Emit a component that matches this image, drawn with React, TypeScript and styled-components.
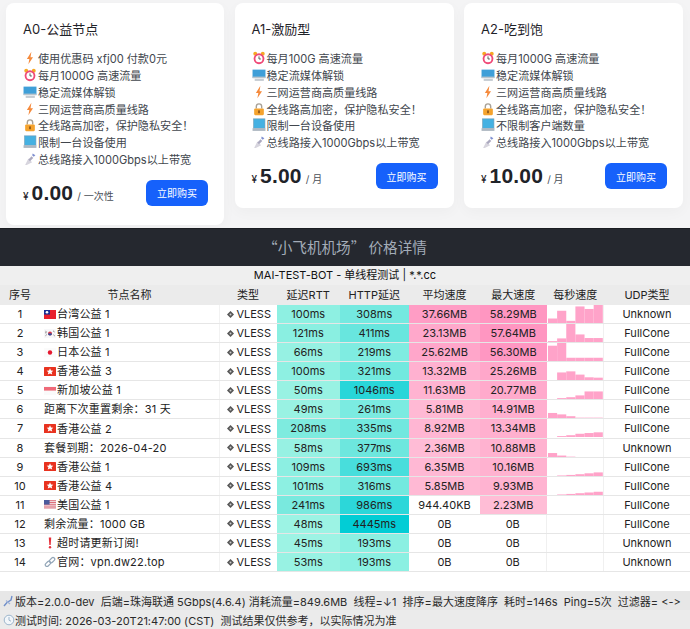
import React from "react";
import styled, { createGlobalStyle } from "styled-components";

const Global = createGlobalStyle`
  html, body { margin: 0; padding: 0; background: #fff; }
  body {
    font-family: Inter, "Noto Sans CJK SC", "Noto Sans", sans-serif;
    font-variant-ligatures: none;
    font-feature-settings: "calt" 0, "liga" 0;
    width: 690px;
    height: 629px;
    overflow: hidden;
  }
  * { box-sizing: border-box; }
`;

const Page = styled.div`
  width: 690px;
  height: 629px;
  display: flex;
  flex-direction: column;
  overflow: hidden;
`;

const Plans = styled.section`
  height: 228px;
  background: #f4f4f5;
  display: grid;
  grid-template-columns: 218px 219px 219px;
  column-gap: 10.5px;
  align-items: start;
  padding: 3px 0 0 6px;
`;

const Card = styled.article<{ $tall?: boolean }>`
  background: #fff;
  border-radius: 8px;
  height: ${(p) => (p.$tall ? 222 : 205)}px;
  padding: 17px 16px 0 17px;
  box-shadow: 0 4px 14px rgba(0, 0, 0, 0.03);
  display: flex;
  flex-direction: column;
`;

const CardTitle = styled.h3`
  margin: 0;
  font-size: 13px;
  line-height: 18px;
  font-weight: 400;
  color: #1f2329;
`;

const Features = styled.ul`
  list-style: none;
  margin: 12px 0 0;
  padding: 0;
`;

const Feature = styled.li`
  display: flex;
  align-items: center;
  height: 16.75px;
  font-size: 11.1px;
  color: #41464d;
  white-space: nowrap;
`;

const EmojiSlot = styled.svg`
  width: 14px;
  height: 14px;
  margin-right: 1px;
  flex: none;
`;

const Buy = styled.div`
  display: flex;
  align-items: center;
  justify-content: space-between;
  margin-top: 12.6px;
  height: 26px;
`;

const Price = styled.div`
  display: flex;
  align-items: baseline;
  color: #1f2329;
`;

const Currency = styled.span`
  font-size: 10px;
  margin-right: 3px;
  font-weight: 500;
`;

const Amount = styled.span`
  font-family: "Liberation Sans", Arial, sans-serif;
  font-size: 21px;
  font-weight: 700;
  letter-spacing: 0.2px;
`;

const Period = styled.span`
  font-size: 10px;
  margin-left: 4px;
  color: #4a4f57;
`;

const BuyButton = styled.button`
  width: 62px;
  height: 26px;
  border: 0;
  border-radius: 6px;
  background: #1661fb;
  color: #fff;
  font: 400 10px "Noto Sans CJK SC", sans-serif;
  padding: 0;
`;

const Banner = styled.h2`
  margin: 0;
  height: 38px;
  background: #25282f;
  border-top: 1px solid #1b1d22;
  color: #a3acb8;
  font-family: "Noto Sans CJK SC", sans-serif;
  font-size: 14.6px;
  font-weight: 400;
  line-height: 36px;
  text-align: center;
`;

const ReportTitle = styled.div`
  height: 19px;
  background: #efefef;
  color: #111;
  font-size: 11px;
  line-height: 19px;
  text-align: center;
`;

const COLS = "40px 179px 58px 62.5px 69.5px 71px 66.5px 57.5px 86px";

const HeadRow = styled.div`
  display: grid;
  grid-template-columns: ${COLS};
  height: 20.3px;
  background: #ebebeb;
`;

const HeadCell = styled.div`
  font-size: 11px;
  line-height: 20px;
  text-align: center;
  color: #222;
  white-space: nowrap;
`;

const Row = styled.div`
  display: grid;
  grid-template-columns: ${COLS};
  height: 19.1px;
  background: #fff;
  border-bottom: 1px solid #e6e6e6;
`;

const Cell = styled.div<{ $bg?: string; $left?: boolean; $line?: boolean }>`
  font-size: 11px;
  line-height: 18px;
  color: #222;
  white-space: nowrap;
  overflow: hidden;
  text-align: ${(p) => (p.$left ? "left" : "center")};
  background: ${(p) => p.$bg ?? "transparent"};
  border-right: ${(p) => (p.$line ? "1px solid #f0f0f0" : "0")};
`;

const NameCell = styled(Cell)`
  display: flex;
  align-items: center;
  padding-left: 4px;
  letter-spacing: 0.2px;
`;

const TypeCell = styled(Cell)`
  display: flex;
  align-items: center;
  justify-content: flex-end;
  padding-right: 6px;
  border-left: 1px solid #f2f2f2;
`;

const Flag = styled.svg`
  width: 12px;
  height: 9px;
  margin-right: 1px;
  flex: none;
`;

const Glyph = styled.svg`
  width: 12px;
  height: 12px;
  margin-right: 1px;
  flex: none;
`;

const Diamond = styled.svg`
  width: 7px;
  height: 7px;
  margin-right: 2px;
  flex: none;
`;

const Spark = styled.svg`
  display: block;
  width: 100%;
  height: 18px;
`;

const Gap = styled.div`
  height: 19px;
  background: #fff;
`;

const Status = styled.div<{ $alt?: boolean }>`
  height: 19px;
  background: ${(p) => (p.$alt ? "#ebebeb" : "#e7e7e7")};
  display: flex;
  align-items: center;
  padding-left: 3px;
  font-size: 11px;
  color: #2a2a2a;
  white-space: pre;
`;

const StatusIcon = styled.svg`
  width: 12px;
  height: 12px;
  flex: none;
`;

type Em = "bolt" | "clock" | "screen" | "lock" | "laptop" | "sat";

function Emoji({ k }: { k: Em }) {
  return (
    <EmojiSlot viewBox="0 0 13 13">
      {k === "bolt" && <path d="M7.8 .8 3.6 7.4h2.3L5 12.4l4.3-6.6H7Z" fill="#f58a3c" />}
      {k === "clock" && (
        <>
          <circle cx="3" cy="2.6" r="1.8" fill="#f6a723" />
          <circle cx="10" cy="2.6" r="1.8" fill="#f6a723" />
          <circle cx="6.5" cy="7.2" r="5" fill="#ef4a78" />
          <circle cx="6.5" cy="7.2" r="3.3" fill="#fff" />
          <path d="M6.5 5v2.4h1.7" stroke="#555" strokeWidth=".9" fill="none" />
        </>
      )}
      {k === "screen" && (
        <>
          <rect x="0.5" y="1.5" width="12" height="7.5" fill="#3f9fd8" />
          <rect x="0.5" y="8" width="12" height="1.5" fill="#b9c4cc" />
          <rect x="2.5" y="10" width="8.5" height="2" fill="#c5ccd2" />
        </>
      )}
      {k === "lock" && (
        <>
          <path d="M4 6V4.2a2.5 2.5 0 0 1 5 0V6" stroke="#a8a196" strokeWidth="1.3" fill="none" />
          <rect x="2" y="6" width="9" height="6.2" rx="1" fill="#f5a32e" />
          <rect x="5.8" y="7.8" width="1.4" height="2.6" fill="#7d4a16" />
        </>
      )}
      {k === "laptop" && (
        <>
          <rect x="1.5" y="0.8" width="10.5" height="8.7" fill="#45b1e2" />
          <rect x="1.5" y="0.8" width="10.5" height="8.7" fill="none" stroke="#6d9db8" strokeWidth=".6" />
          <rect x="0.5" y="9.5" width="12" height="2.5" fill="#aeb8c2" />
        </>
      )}
      {k === "sat" && (
        <>
          <path d="M2 12 5 6l3.5 3.5L3.5 12Z" fill="#d7d5de" />
          <path d="M5 7l3-3 1.5 1.5-3 3Z" fill="#aba9bf" />
          <path d="M9 1.5 11.5 3 10 4.5 8.5 3Z" fill="#7f8fd0" />
        </>
      )}
    </EmojiSlot>
  );
}

type FlagK = "tw" | "kr" | "jp" | "hk" | "sg" | "us";

function FlagIcon({ k }: { k: FlagK }) {
  return (
    <Flag viewBox="0 0 12 9">
      {k === "tw" && (
        <>
          <rect width="12" height="9" fill="#e8202c" />
          <rect width="6" height="4.6" fill="#1a2f95" />
          <circle cx="3" cy="2.3" r="1.3" fill="#fff" />
        </>
      )}
      {k === "kr" && (
        <>
          <rect width="12" height="9" fill="#f7f7f9" />
          <circle cx="6" cy="4.5" r="2" fill="#d9364a" />
          <path d="M4 4.5a2 2 0 0 0 4 0Z" fill="#27509e" />
          <path d="M1.4 2.2 3 3.4M1 3.4 2.2 4.4M9 1.8l1.6 1.2M9.4 5.8l1.4 1.2M1.4 6.8l1.4-1.2" stroke="#666" strokeWidth=".7" />
        </>
      )}
      {k === "jp" && (
        <>
          <rect width="12" height="9" fill="#fbfbfb" />
          <circle cx="6" cy="4.5" r="2.2" fill="#e5182f" />
        </>
      )}
      {k === "hk" && (
        <>
          <rect width="12" height="9" rx="0.5" fill="#e8321f" />
          <path d="M6 1.3 7 3.5l2.3.2L7.6 5.3l.6 2.3L6 6.4 3.8 7.6l.6-2.3L2.7 3.7 5 3.5Z" fill="#fff" />
        </>
      )}
      {k === "sg" && (
        <>
          <rect width="12" height="9" fill="#fafafa" />
          <rect width="12" height="3.6" y="1" fill="#ef6a78" />
        </>
      )}
      {k === "us" && (
        <>
          <rect width="12" height="9" fill="#f4f0f2" />
          <path d="M0 .7h12M0 2.5h12M0 4.3h12M0 6.1h12M0 7.9h12" stroke="#d9606c" strokeWidth=".9" />
          <rect width="5.6" height="4.6" fill="#4b5a9c" />
        </>
      )}
    </Flag>
  );
}

const plans: { title: string; tall?: boolean; feats: [Em, string][]; price: string; period: string }[] = [
  {
    title: "A0-公益节点",
    tall: true,
    feats: [
      ["bolt", "使用优惠码 xfj00 付款0元"],
      ["clock", "每月1000G 高速流量"],
      ["screen", "稳定流媒体解锁"],
      ["bolt", "三网运营商高质量线路"],
      ["lock", "全线路高加密，保护隐私安全！"],
      ["laptop", "限制一台设备使用"],
      ["sat", "总线路接入1000Gbps以上带宽"],
    ],
    price: "0.00",
    period: "/ 一次性",
  },
  {
    title: "A1-激励型",
    feats: [
      ["clock", "每月100G 高速流量"],
      ["screen", "稳定流媒体解锁"],
      ["bolt", "三网运营商高质量线路"],
      ["lock", "全线路高加密，保护隐私安全！"],
      ["laptop", "限制一台设备使用"],
      ["sat", "总线路接入1000Gbps以上带宽"],
    ],
    price: "5.00",
    period: "/ 月",
  },
  {
    title: "A2-吃到饱",
    feats: [
      ["clock", "每月1000G 高速流量"],
      ["screen", "稳定流媒体解锁"],
      ["bolt", "三网运营商高质量线路"],
      ["lock", "全线路高加密，保护隐私安全！"],
      ["laptop", "不限制客户端数量"],
      ["sat", "总线路接入1000Gbps以上带宽"],
    ],
    price: "10.00",
    period: "/ 月",
  },
];

type Prefix = FlagK | "warn" | "link" | null;

const rows: {
  name: string;
  pre: Prefix;
  rtt: [string, string];
  http: [string, string];
  avg: [string, string];
  max: [string, string];
  bars: number[];
  udp: string;
}[] = [
  { name: "台湾公益 1", pre: "tw", rtt: ["100ms", "#8ef0e2"], http: ["308ms", "#74e9e0"], avg: ["37.66MB", "#ff9dc5"], max: ["58.29MB", "#ff96c1"], bars: [0.25, 0.68, 0.12, 0.92, 0.78, 1], udp: "Unknown" },
  { name: "韩国公益 1", pre: "kr", rtt: ["121ms", "#8aefe1"], http: ["411ms", "#68e6de"], avg: ["23.13MB", "#ffa8cb"], max: ["57.64MB", "#ff96c1"], bars: [0.05, 0.2, 1, 0.42, 0.22, 0.22], udp: "FullCone" },
  { name: "日本公益 1", pre: "jp", rtt: ["66ms", "#96f1e3"], http: ["219ms", "#7fece1"], avg: ["25.62MB", "#ffa6ca"], max: ["56.30MB", "#ff97c2"], bars: [0.85, 1, 0.18, 0.18, 0.18, 0.18], udp: "FullCone" },
  { name: "香港公益 3", pre: "hk", rtt: ["100ms", "#8ef0e2"], http: ["321ms", "#72e9df"], avg: ["13.32MB", "#ffb1d0"], max: ["25.26MB", "#ffa7ca"], bars: [0, 0.42, 0.48, 0.3, 0.15, 0.13], udp: "FullCone" },
  { name: "新加坡公益 1", pre: "sg", rtt: ["50ms", "#98f2e3"], http: ["1046ms", "#28d6d9"], avg: ["11.63MB", "#ffb3d1"], max: ["20.77MB", "#ffaacc"], bars: [0, 0.05, 0.1, 0.2, 0.42, 0.42], udp: "FullCone" },
  { name: "距离下次重置剩余：31 天", pre: null, rtt: ["49ms", "#99f2e3"], http: ["261ms", "#7bebe1"], avg: ["5.81MB", "#ffb9d4"], max: ["14.91MB", "#ffafcf"], bars: [0.28, 0.2, 0.1, 0.02, 0.02, 0.02], udp: "FullCone" },
  { name: "香港公益 2", pre: "hk", rtt: ["208ms", "#7eebdf"], http: ["335ms", "#71e8df"], avg: ["8.92MB", "#ffb6d3"], max: ["13.34MB", "#ffb0cf"], bars: [0, 0.05, 0.1, 0.18, 0.22, 0.26], udp: "FullCone" },
  { name: "套餐到期：2026-04-20", pre: null, rtt: ["58ms", "#97f1e3"], http: ["377ms", "#6de7de"], avg: ["2.36MB", "#ffbcd6"], max: ["10.88MB", "#ffb2d0"], bars: [0.22, 0.08, 0.02, 0, 0, 0], udp: "Unknown" },
  { name: "香港公益 1", pre: "hk", rtt: ["109ms", "#8cefe2"], http: ["693ms", "#48dedc"], avg: ["6.35MB", "#ffb8d4"], max: ["10.16MB", "#ffb2d0"], bars: [0, 0.03, 0.06, 0.1, 0.15, 0.2], udp: "FullCone" },
  { name: "香港公益 4", pre: "hk", rtt: ["101ms", "#8df0e2"], http: ["316ms", "#73e9df"], avg: ["5.85MB", "#ffb9d4"], max: ["9.93MB", "#ffb3d1"], bars: [0, 0.03, 0.06, 0.1, 0.14, 0.18], udp: "FullCone" },
  { name: "美国公益 1", pre: "us", rtt: ["241ms", "#79e9de"], http: ["986ms", "#2cd7d9"], avg: ["944.40KB", "#ffffff"], max: ["2.23MB", "#ffbdd6"], bars: [0, 0, 0, 0, 0, 0], udp: "FullCone" },
  { name: "剩余流量：1000 GB", pre: null, rtt: ["48ms", "#9cf3e4"], http: ["4445ms", "#02cdd5"], avg: ["0B", "#ffffff"], max: ["0B", "#ffffff"], bars: [0, 0, 0, 0, 0, 0], udp: "FullCone" },
  { name: "超时请更新订阅!", pre: "warn", rtt: ["45ms", "#9df3e4"], http: ["193ms", "#8bf0e2"], avg: ["0B", "#ffffff"], max: ["0B", "#ffffff"], bars: [0, 0, 0, 0, 0, 0], udp: "Unknown" },
  { name: "官网：vpn.dw22.top", pre: "link", rtt: ["53ms", "#98f2e3"], http: ["193ms", "#8bf0e2"], avg: ["0B", "#ffffff"], max: ["0B", "#ffffff"], bars: [0, 0, 0, 0, 0, 0], udp: "Unknown" },
];

function Prefixed({ p }: { p: Prefix }) {
  if (p === null) return null;
  if (p === "warn")
    return (
      <Glyph viewBox="0 0 12 12">
        <path d="M4.8 .5h2.4L6.7 8H5.3Z" fill="#e5303a" />
        <circle cx="6" cy="10.2" r="1.2" fill="#e5303a" />
      </Glyph>
    );
  if (p === "link")
    return (
      <Glyph viewBox="0 0 12 12">
        <g fill="none" stroke="#93a6b8" strokeWidth="1.2">
          <rect x="0.9" y="6.2" width="6" height="3.4" rx="1.7" transform="rotate(-45 3.9 7.9)" />
          <rect x="5.1" y="2.4" width="6" height="3.4" rx="1.7" transform="rotate(-45 8.1 4.1)" />
        </g>
      </Glyph>
    );
  return <FlagIcon k={p} />;
}

function Sparkline({ bars }: { bars: number[] }) {
  return (
    <Spark viewBox="0 0 57.5 18" preserveAspectRatio="none">
      {bars.map((b, i) =>
        b > 0 ? <rect key={i} x={1 + i * 9.3} y={18 - b * 18} width={9.3} height={b * 18} fill="#ffa3c9" /> : null
      )}
    </Spark>
  );
}

const heads = ["序号", "节点名称", "类型", "延迟RTT", "HTTP延迟", "平均速度", "最大速度", "每秒速度", "UDP类型"];

export default function App() {
  return (
    <Page>
      <Global />
      <Plans>
        {plans.map((pl) => (
          <Card key={pl.title} $tall={pl.tall}>
            <CardTitle>{pl.title}</CardTitle>
            <Features>
              {pl.feats.map(([k, t]) => (
                <Feature key={t}>
                  <Emoji k={k} />
                  {t}
                </Feature>
              ))}
            </Features>
            <Buy>
              <Price>
                <Currency>¥</Currency>
                <Amount>{pl.price}</Amount>
                <Period>{pl.period}</Period>
              </Price>
              <BuyButton>立即购买</BuyButton>
            </Buy>
          </Card>
        ))}
      </Plans>
      <Banner>“小飞机机场” 价格详情</Banner>
      <ReportTitle>MAI-TEST-BOT - 单线程测试 | *.*.cc</ReportTitle>
      <HeadRow>
        {heads.map((h) => (
          <HeadCell key={h}>{h}</HeadCell>
        ))}
      </HeadRow>
      {rows.map((r, i) => (
        <Row key={i}>
          <Cell>{i + 1}</Cell>
          <NameCell $left>
            <Prefixed p={r.pre} />
            {r.name}
          </NameCell>
          <TypeCell>
            <Diamond viewBox="0 0 8 8">
              <path d="M4 0 8 4 4 8 0 4Z" fill="#555" />
              <circle cx="4" cy="4" r="1.1" fill="#ccc" />
            </Diamond>
            VLESS
          </TypeCell>
          <Cell $bg={r.rtt[1]}>{r.rtt[0]}</Cell>
          <Cell $bg={r.http[1]}>{r.http[0]}</Cell>
          <Cell $bg={r.avg[1]}>{r.avg[0]}</Cell>
          <Cell $bg={r.max[1]} $line={r.max[1] === "#ffffff"}>{r.max[0]}</Cell>
          <Cell $line>
            <Sparkline bars={r.bars} />
          </Cell>
          <Cell>{r.udp}</Cell>
        </Row>
      ))}
      <Gap />
      <Status>
        <StatusIcon viewBox="0 0 12 12">
          <path d="M1 11 4 7.5 8 5l1-4" fill="none" stroke="#6f8ec9" strokeWidth="1.4" />
          <path d="M3 5.5 7 9" stroke="#9fb2d8" strokeWidth="1.2" />
        </StatusIcon>
        {"版本=2.0.0-dev  后端=珠海联通 5Gbps(4.6.4) 消耗流量=849.6MB  线程=↓1  排序=最大速度降序  耗时=146s  Ping=5次  过滤器= <->"}
      </Status>
      <Status $alt>
        <StatusIcon viewBox="0 0 12 12">
          <circle cx="6" cy="6" r="4.8" fill="#f2f6fa" stroke="#9db6cc" />
          <path d="M6 3v3.2l2 1" stroke="#9db6cc" fill="none" />
        </StatusIcon>
        {"测试时间: 2026-03-20T21:47:00 (CST)  测试结果仅供参考，以实际情况为准"}
      </Status>
    </Page>
  );
}
